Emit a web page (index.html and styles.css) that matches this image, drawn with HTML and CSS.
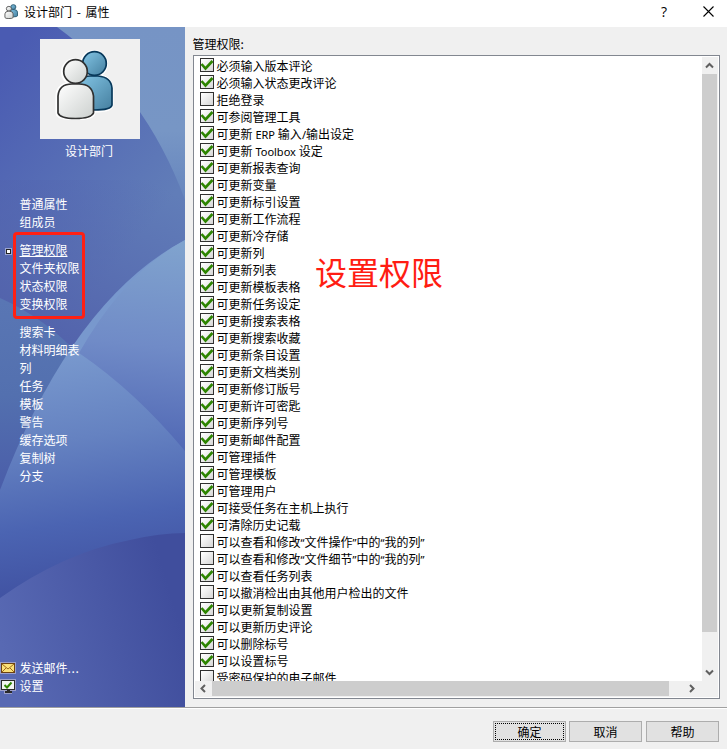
FILE: index.html
```
<!DOCTYPE html>
<html lang="zh-CN">
<head>
<meta charset="utf-8">
<title>设计部门 - 属性</title>
<link rel="stylesheet" href="styles.css">
</head>
<body>
<svg class="defs" width="0" height="0" aria-hidden="true">
  <defs>
    <linearGradient id="gw" x1="0" y1="0" x2="1" y2="1"><stop offset="0" stop-color="#fff"/><stop offset="1" stop-color="#ccd0ce"/></linearGradient>
    <linearGradient id="gc" x1="0" y1="0" x2="1" y2="1"><stop offset=".1" stop-color="#fff"/><stop offset="1" stop-color="#d4d4d4"/></linearGradient>
    <linearGradient id="gb" x1="0" y1="0" x2="1" y2="1"><stop offset="0" stop-color="#84c6e6"/><stop offset="1" stop-color="#457f9f"/></linearGradient>
    <symbol id="people" viewBox="0 0 60 70">
      <g fill="none" stroke="#fff" stroke-width="5"><circle cx="40" cy="14" r="11.5"/><path d="M24 50V38Q25 26 40 26T57 38V55Q57 60 40 60Z"/><circle cx="21" cy="22" r="11.5"/><path d="M4 46Q4 34 21 34T39 46V63Q38 68 21 68T4 63Z"/></g>
      <g fill="url(#gb)" stroke="#08395b" stroke-width="1.7"><path d="M24 50V38Q25 26 36 26H44Q57 27 58 38V55Q57 60 40 60Z"/><circle cx="40.500" cy="13.500" r="11.800"/></g>
      <g fill="url(#gw)" stroke="#303030" stroke-width="1.7"><circle cx="21.500" cy="21.500" r="11.800"/><path d="M4 46Q5 34 18 34H25Q38 34 39.500 46V63Q37 68.500 21.500 68.500T4 63Z"/></g>
    </symbol>
  </defs>
</svg>
<header class="titlebar">
  <svg class="app-icon" viewBox="0 0 60 70" preserveAspectRatio="none"><g stroke-width="4"><g fill="url(#gb)" stroke="#24566f"><path d="M24 50V38Q25 26 36 26H44Q57 27 58 38V55Q57 60 40 60Z"/><circle cx="40" cy="14" r="11"/></g><g fill="url(#gw)" stroke="#555"><circle cx="21" cy="22" r="11"/><path d="M4 46Q5 34 18 34H25Q38 34 39 46V63Q37 68 21 68T4 63Z"/></g></g></svg>
  <span class="title">设计部门 - 属性</span>
  <span class="help">?</span>
  <svg class="close" width="11" height="11" viewBox="0 0 11 11"><path d="M.5 .5l10 10M10.500 .5l-10 10" stroke="#000" stroke-width="1.100"/></svg>
</header>
<main class="body">
  <aside class="side">
    <svg class="art" width="185" height="680" viewBox="0 27 185 680" aria-hidden="true">
      <defs>
        <linearGradient id="a" gradientUnits="userSpaceOnUse" x1="0" y1="60" x2="170" y2="200"><stop offset="0" stop-color="#4a5bb2"/><stop offset="1" stop-color="#617db8"/></linearGradient>
        <linearGradient id="a2" gradientUnits="userSpaceOnUse" x1="150" y1="180" x2="60" y2="350"><stop offset="0" stop-color="#5263ae" stop-opacity="0"/><stop offset="1" stop-color="#5262ab"/></linearGradient>
        <linearGradient id="b" x1="0" y1="0" x2="0" y2="1"><stop offset="0" stop-color="#7694c5"/><stop offset=".6" stop-color="#7796c5"/><stop offset="1" stop-color="#6685bd"/></linearGradient>
        <linearGradient id="c" gradientUnits="userSpaceOnUse" x1="0" y1="300" x2="0" y2="490"><stop offset="0" stop-color="#5976b4"/><stop offset=".5" stop-color="#5370af"/><stop offset="1" stop-color="#4a5da9"/></linearGradient>
        <linearGradient id="d" gradientUnits="userSpaceOnUse" x1="150" y1="240" x2="130" y2="450"><stop offset="0" stop-color="#80a3ce"/><stop offset=".5" stop-color="#708bc7"/><stop offset="1" stop-color="#5067b4"/></linearGradient>
        <linearGradient id="e" gradientUnits="userSpaceOnUse" x1="70" y1="355" x2="105" y2="590"><stop offset="0" stop-color="#7898cd"/><stop offset=".35" stop-color="#6582c1"/><stop offset=".7" stop-color="#4b64b2"/><stop offset="1" stop-color="#4051a1"/></linearGradient>
        <linearGradient id="f" gradientUnits="userSpaceOnUse" x1="0" y1="640" x2="170" y2="590"><stop offset="0" stop-color="#5869b3"/><stop offset="1" stop-color="#404e9d"/></linearGradient>
      </defs>
      <path d="M0 27H185V707H0Z" fill="url(#a)"/>
      <path d="M0 180H185V500H0Z" fill="url(#a2)"/>
      <path d="M57 27Q145 91 185 200V27Z" fill="url(#b)"/>
      <path d="M0 298Q45 318 80 356L0 490Z" fill="url(#c)"/>
      <path d="M185 240Q72 300 0 490V600H185Z" fill="url(#e)"/>
      <path d="M185 240Q125 272 79 353Q135 391 185 451Z" fill="url(#d)"/>
      <path d="M0 598Q63 553 130 540Q160 533 185 533V707H0Z" fill="url(#f)"/>
    </svg>
    <div class="portrait"><svg width="60" height="70"><use href="#people"/></svg></div>
    <div class="group-name">设计部门</div>
    <nav class="nav">
      <div class="nav-group"><a>普通属性</a><a>组成员</a></div>
      <div class="nav-group marked"><a class="current">管理权限</a><a>文件夹权限</a><a>状态权限</a><a>变换权限</a></div>
      <div class="nav-group"><a>搜索卡</a><a>材料明细表</a><a>列</a><a>任务</a><a>模板</a><a>警告</a><a>缓存选项</a><a>复制树</a><a>分支</a></div>
    </nav>
    <div class="links">
      <a><svg width="16" height="16" viewBox="0 0 16 16"><rect x="0" y="2" width="16" height="12" fill="#9b9fca"/><rect x="1.500" y="3.500" width="13" height="9" fill="#fbe178" stroke="#6b4212"/><path d="M2 4l6 5 6-5M2 12l4-4M14 12l-4-4" fill="none" stroke="#9c681c"/></svg><span>发送邮件<span class="dots">...</span></span></a>
      <a><svg width="16" height="16" viewBox="0 0 16 16"><path d="M0 1h16v12h-4v3H4v-3H0z" fill="#9b9fca"/><rect x="1.500" y="2.500" width="13" height="9" fill="#f2f4f2" stroke="#292929"/><path d="M7 12h3v1h2v2H5v-2h2z" fill="#292929"/><path d="M4.500 7l2.500 2.500 4.500-5" fill="none" stroke="#2d8500" stroke-width="2"/></svg>设置</a>
    </div>
  </aside>
  <section class="content">
    <label class="heading">管理权限:</label>
    <div class="listbox">
      <ul class="list" id="list"></ul>
      <div class="vbar"><svg width="15" height="17"><path d="M4 10.500L7.500 7l3.500 3.500" class="chev"/></svg><div class="vthumb"></div><svg class="end" width="15" height="17"><path d="M4 6.500L7.500 10l3.500-3.500" class="chev"/></svg></div>
      <div class="hbar"><svg width="17" height="15"><path d="M10 4L6.500 7.500 10 11" class="chev"/></svg><div class="hthumb"></div><svg class="end" width="17" height="15"><path d="M6 4l3.500 3.500L6 11" class="chev"/></svg></div>
      <div class="note">设置权限</div>
    </div>
  </section>
</main>
<footer class="footer">
  <button class="default">确定</button><button>取消</button><button>帮助</button>
</footer>
<script src="list.js"></script>
</body>
</html>
```
FILE: styles.css
```
*, *::before, *::after { box-sizing: border-box; }
body {
  margin: 0; width: 727px; height: 749px; overflow: hidden;
  display: flex; flex-direction: column; background: #f0f0f0; color: #000;
  font: 12px/17px "Noto Sans CJK SC", sans-serif;
}
svg { display: block; flex: none; }
.defs { position: absolute; }
.titlebar { height: 27px; flex: none; background: #fff; display: flex; align-items: center; padding: 0 13px 4px 4px; }
.app-icon { width: 14px; height: 15px; margin-right: 6px; }
.title { flex: 1; word-spacing: 2px; }
.help { font: 14px/20px "Open Sans", sans-serif; margin-right: 36px; }
.body { height: 680px; flex: none; display: flex; }
.side { width: 185px; position: relative; color: #fff; display: flex; flex-direction: column; }
.side > * { position: relative; }
.side .art { position: absolute; left: 0; top: 0; }
.portrait { width: 100px; height: 100px; margin: 12px 0 0 40px; background: #f0f0f0; padding: 11px 0 0 14px; }
.group-name { padding-left: 65px; margin-top: 3px; }
.nav { margin-top: 36px; padding-left: 19.5px; }
.nav-group { position: relative; margin-bottom: 10px; }
.nav a, .links a { display: block; height: 18px; line-height: 18px; }
.current { text-decoration: underline; text-underline-offset: 1px; }
.marked::before { content: ""; position: absolute; left: -6.5px; top: -9px; width: 72px; height: 87px; border: 3px solid #ff2014; border-radius: 4px; }
.marked::after { content: ""; position: absolute; left: -13.5px; top: 8px; width: 5px; height: 5px; background: #fff; border: 1.500px solid #222; outline: 1px solid #9ba5d0; }
.links { margin-top: auto; padding-bottom: 12px; }
.links a { display: flex; align-items: center; gap: 3.5px; }
.dots { letter-spacing: .6px; }
.content { flex: 1; padding: 8px 7px 8px 8px; display: flex; flex-direction: column; }
.heading { height: 20px; margin-left: -0.5px; }
.listbox { position: relative; flex: none; height: 644px; border: 1px solid #828790; background: #fff; padding: 1px; display: grid; grid-template: 624px 16px / 507px 16px; }
.list { grid-area: 1 / 1; margin: 0; padding: 1px 0 0 5px; list-style: none; overflow: hidden; }
.list li { height: 17px; display: flex; gap: 2.5px; white-space: pre; }
.list svg { width: 14px; height: 14px; }
.label { height: 17px; line-height: 17px; margin-top: -1px; }
.latin { font: 11px/17px "Noto Sans", sans-serif; }
.vbar, .hbar { background: #f0f0f0; display: flex; }
.vbar { flex-direction: column; grid-area: 1 / 2; }
.vthumb { width: 15px; height: 558px; background: #cdcdcd; }
.hbar { grid-area: 2 / 1 / 3 / 3; }
.hthumb { width: 457px; height: 15px; background: #cdcdcd; }
.vbar .end { margin-top: auto; }
.hbar .end { margin-left: 15px; }
.chev { fill: none; stroke: #606060; stroke-width: 2; }
.note { position: absolute; left: 121px; top: 192px; font-size: 32px; line-height: 46px; color: #ff1d12; }
.footer { flex: 1; border-top: 1px solid #a0a0a0; box-shadow: inset 0 1px #fff; padding: 13px 8px 0 0; display: flex; justify-content: flex-end; gap: 3px; }
.footer button { width: 73px; height: 21px; padding: 0; border: 1px solid #adadad; border-radius: 0; background: #e1e1e1; color: #000; font: inherit; }
.footer button:last-child { margin-left: 1px; }
.footer .default { outline: 1px dotted #000; outline-offset: -3px; }
```
FILE: list.js
```
const rows = [
  "+必须输入版本评论", "+必须输入状态更改评论", "-拒绝登录", "+可参阅管理工具",
  "+可更新 ERP 输入/输出设定", "+可更新 Toolbox 设定", "+可更新报表查询", "+可更新变量",
  "+可更新标引设置", "+可更新工作流程", "+可更新冷存储", "+可更新列", "+可更新列表",
  "+可更新模板表格", "+可更新任务设定", "+可更新搜索表格", "+可更新搜索收藏", "+可更新条目设置",
  "+可更新文档类别", "+可更新修订版号", "+可更新许可密匙", "+可更新序列号", "+可更新邮件配置",
  "+可管理插件", "+可管理模板", "+可管理用户", "+可接受任务在主机上执行", "+可清除历史记载",
  "-可以查看和修改“文件操作”中的“我的列”", "-可以查看和修改“文件细节”中的“我的列”",
  "+可以查看任务列表", "-可以撤消检出由其他用户检出的文件", "+可以更新复制设置",
  "+可以更新历史评论", "+可以删除标号", "+可以设置标号", "-受密码保护的电子邮件"
];
const tick = '<path d="M1.500 6l4 4.500L12.500 3" fill="none" stroke="#2d8500" stroke-width="2.600"/>';
document.getElementById("list").innerHTML = rows.map(r =>
  '<li><svg viewBox="0 0 14 14"><rect x=".5" y=".5" width="13" height="13" fill="url(#gc)" stroke="#303030"/>' +
  (r[0] === "+" ? tick : "") + '</svg><span class="label">' +
  r.slice(1).replace(/[ A-Za-z\/“”]+/g, '<span class="latin">$&</span>') + "</span></li>").join("");
```
